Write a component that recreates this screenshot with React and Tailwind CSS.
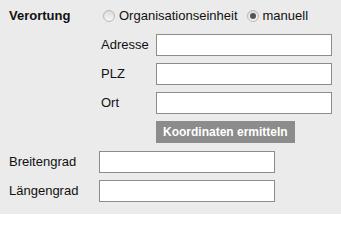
import React from "react";

function Radio({ checked }) {
  return (
    <span className="relative inline-flex items-center justify-center w-[12px] h-[12px] rounded-full border border-[#b8b8b8] bg-gradient-to-b from-[#dcdcdc] to-[#f6f6f6] shrink-0">
      {checked && <span className="w-[6px] h-[6px] rounded-full bg-[#555]" />}
    </span>
  );
}

function Field() {
  return <div className="w-[176px] h-[22px] border border-[#8c8c8c] bg-white shrink-0" />;
}

export default function App() {
  return (
    <div
      className="w-[341px] h-[214px] bg-[#ebebeb] text-[13px] text-[#111] pl-[9px] pt-[6px]"
      style={{ fontFamily: '"Liberation Sans", Arial, sans-serif' }}
    >
      <div className="flex">
        <div className="w-[94px] h-[20px] flex items-center font-bold">Verortung</div>
        <div className="flex flex-col">
          <div className="h-[20px] flex items-center">
            <Radio />
            <span className="ml-[4px]">Organisationseinheit</span>
            <span className="ml-[9px] flex"><Radio checked /></span>
            <span className="ml-[4px]">manuell</span>
          </div>
        </div>
      </div>
      <div className="ml-[90px] mt-[8px] flex flex-col gap-[7px]">
        {["Adresse", "PLZ", "Ort"].map((l) => (
          <div key={l} className="flex items-center">
            <div className="w-[57px] pl-[2px]">{l}</div>
            <Field />
          </div>
        ))}
        <div className="flex">
          <div className="w-[57px]" />
          <div className="h-[22px] w-[139px] bg-[#8c8c8c] text-white font-bold text-[12px] flex items-center pl-[7px]">
            Koordinaten ermitteln
          </div>
        </div>
      </div>
      <div className="mt-[8px] flex flex-col gap-[7px]">
        {["Breitengrad", "Längengrad"].map((l) => (
          <div key={l} className="flex items-center">
            <div className="w-[90px]">{l}</div>
            <Field />
          </div>
        ))}
      </div>
    </div>
  );
}
